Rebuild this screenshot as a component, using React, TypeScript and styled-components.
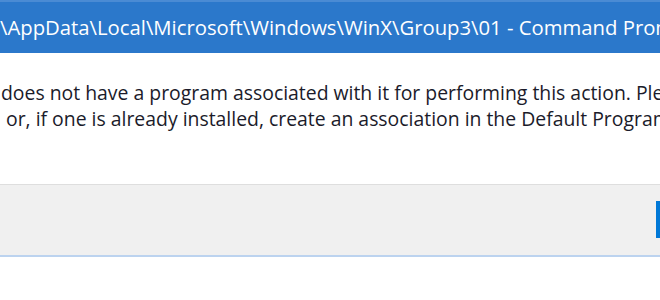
import * as React from 'react';
import styled, { createGlobalStyle } from 'styled-components';

const GlobalStyle = createGlobalStyle`
  html, body {
    margin: 0;
    padding: 0;
    background: #ffffff;
  }
  body {
    width: 660px;
    height: 300px;
    overflow: hidden;
  }
`;

const Dialog = styled.div`
  display: flex;
  flex-direction: column;
  width: 660px;
  height: 300px;
  overflow: hidden;
  background: #ffffff;
  font-family: 'Open Sans', 'Noto Sans', sans-serif;
`;

const TitleBar = styled.div`
  display: flex;
  align-items: center;
  height: 51px;
  border-top: 2px solid #4a8bd4;
  background: #2b78cb;
  color: #ffffff;
  font-size: 20.3px;
  white-space: nowrap;
  overflow: hidden;
`;

const TitleText = styled.span`
  padding-bottom: 2px;
`;

const Content = styled.div`
  display: flex;
  flex-direction: column;
  padding-top: 27px;
  height: 104px;
  color: #1b1b2a;
  font-size: 19.4px;
  line-height: 26px;
  white-space: nowrap;
  overflow: hidden;
`;

const Line = styled.div<{ $indent: number }>`
  padding-left: ${(p) => p.$indent}px;
`;

const Footer = styled.div`
  display: flex;
  align-items: flex-start;
  height: 73px;
  padding-top: 16px;
  box-sizing: border-box;
  background: #f0f0f0;
  border-top: 1px solid #dedede;
  border-bottom: 2px solid #bcd3ef;
  overflow: hidden;
`;

const DefaultButton = styled.button`
  flex: none;
  margin-left: 656px;
  width: 110px;
  height: 37px;
  border: 2px solid #0078d7;
  box-shadow: inset 0 0 0 2px #0078d7;
  background: #e5f1fb;
  padding: 0;
`;

export default function App() {
  return (
    <Dialog>
      <GlobalStyle />
      <TitleBar>
        <TitleText>\AppData\Local\Microsoft\Windows\WinX\Group3\01 - Command Prompt.lnk</TitleText>
      </TitleBar>
      <Content>
        <Line $indent={1}>
          does not have a program associated with it for performing this action. Please install a
        </Line>
        <Line $indent={6}>
          or, if one is already installed, create an association in the Default Programs control panel.
        </Line>
      </Content>
      <Footer>
        <DefaultButton type="button" aria-label="Close" />
      </Footer>
    </Dialog>
  );
}
